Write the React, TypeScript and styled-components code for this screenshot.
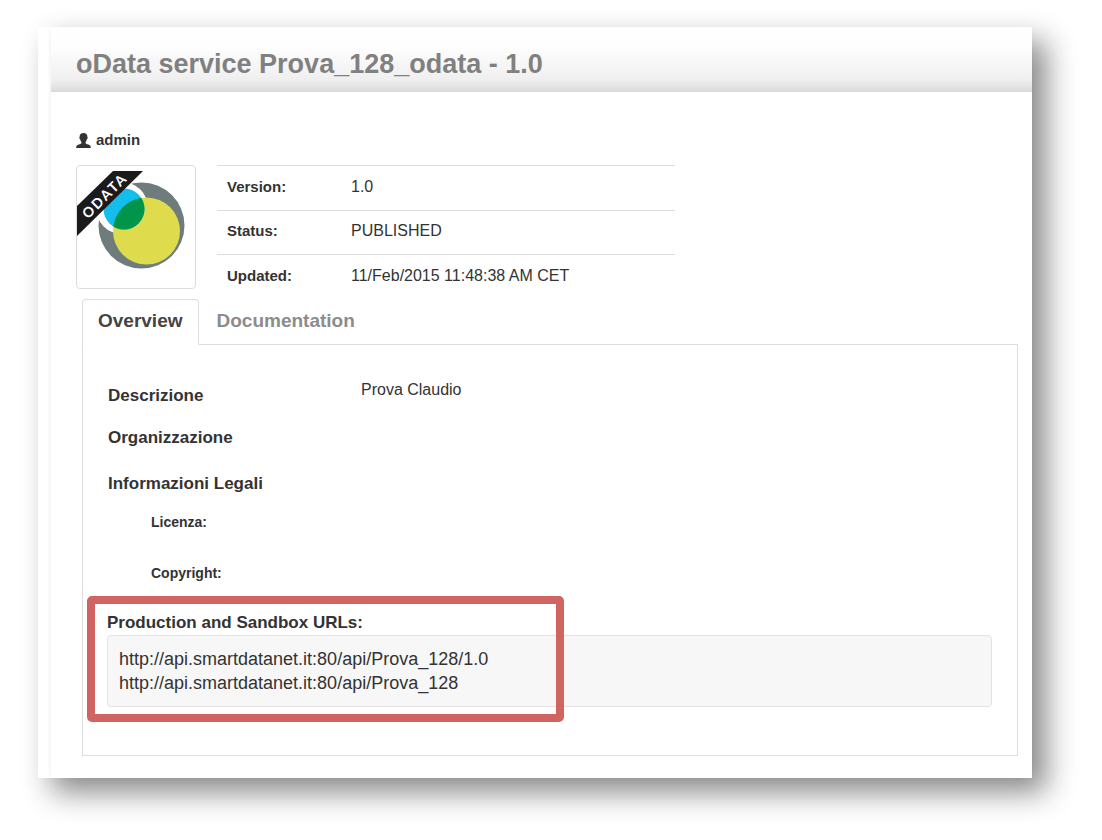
import React from 'react';
import styled, { createGlobalStyle } from 'styled-components';

const GlobalStyle = createGlobalStyle`
  *, *::before, *::after { box-sizing: border-box; }
  body {
    margin: 0;
    background: #fff;
    color: #333;
    font-family: "Liberation Sans", Arial, Helvetica, sans-serif;
    font-size: 15px;
    line-height: 20px;
  }
`;

const Page = styled.div`
  padding: 27px 70px 62px 38px;
`;

const Sheet = styled.main`
  padding-left: 13px;
  background: #fff;
  box-shadow: 14px 14px 28px rgba(0, 0, 0, 0.47);
`;

const Content = styled.div`
  padding-bottom: 22px;
  box-shadow: -3px 0 4px -2px rgba(0, 0, 0, 0.06);
`;

const Header = styled.header`
  height: 65px;
  padding: 0 25px;
  display: flex;
  align-items: center;
  border-top-left-radius: 4px;
  background: linear-gradient(#fff 0%, #fefefe 30%, #efefef 82%, #dadada 100%);
`;

const Title = styled.h1`
  margin: 8px 0 0;
  color: #808080;
  font-size: 27px;
  line-height: 32px;
`;

const Owner = styled.div`
  display: flex;
  align-items: center;
  gap: 5px;
  padding: 38px 25px 0;
  font-weight: bold;
`;

const Summary = styled.section`
  display: flex;
  align-items: flex-start;
  gap: 21px;
  padding: 15px 25px 0;
`;

const Thumbnail = styled.div`
  flex: none;
  width: 120px;
  height: 124px;
  border: 1px solid #ddd;
  border-radius: 4px;
  overflow: hidden;
`;

const Facts = styled.table`
  width: 458px;
  height: 134px;
  border-spacing: 0;
  text-align: left;

  th, td {
    height: 44px;
    padding: 0 10px 2px;
    border-top: 1px solid #ddd;
  }
  th { width: 125px; }
  td {
    padding-left: 9px;
    font-size: 16px;
  }
`;

const Tabs = styled.nav`
  display: flex;
  gap: 2px;
  margin-left: 31px;
`;

const Tab = styled.button<{ $active?: boolean }>`
  height: 46px;
  margin-bottom: -1px;
  padding: 0 15px 2px;
  border: 1px solid ${p => (p.$active ? '#ddd' : 'transparent')};
  border-bottom-color: ${p => (p.$active ? '#fff' : 'transparent')};
  border-radius: 4px 4px 0 0;
  background: ${p => (p.$active ? '#fff' : 'transparent')};
  color: ${p => (p.$active ? '#444' : '#8c8c8c')};
  font: bold 19px/24px "Liberation Sans", Arial, sans-serif;
  cursor: pointer;
`;

const Panel = styled.section`
  margin: 0 14px 0 31px;
  padding: 35px 25px 48px;
  border: 1px solid #ddd;
`;

const Details = styled.dl`
  display: grid;
  grid-template-columns: 253px 1fr;
  margin: 0;

  dt {
    padding-top: 6px;
    font-size: 17px;
    font-weight: bold;
  }
  dd {
    margin: 0;
    height: 42px;
    font-size: 16px;
  }
`;

const SectionTitle = styled.h2`
  margin: 0;
  font-size: 17px;
  line-height: 24px;
`;

const LegalTitle = styled(SectionTitle)`
  padding-top: 8px;
`;

const LegalTerms = styled.dl`
  margin: 0 0 28px 43px;
  padding-top: 16px;
  display: grid;
  gap: 31px;
  font-size: 14px;
  font-weight: bold;

  dt { margin: 0; }
`;

const Endpoints = styled.div`
  position: relative;
  margin-left: -1px;
`;

const Urls = styled.div`
  padding: 11px;
  border: 1px solid #e3e3e3;
  border-radius: 4px;
  background: #f7f7f7;
  font-size: 18px;
  line-height: 24px;
`;

const Highlight = styled.div`
  position: absolute;
  top: -15px;
  bottom: -15px;
  left: -20px;
  width: 477px;
  border: 8px solid #cf6460;
  border-radius: 5px;
  pointer-events: none;
`;

const UserIcon = () => (
  <svg width="15" height="15" viewBox="0 0 15 15" fill="#333" aria-hidden="true">
    <path d="M7.5 0C5 0 3.600 1.400 3.600 3.800c0 .5-.1.8-.3 1 .1.9.4 1.300.8 1.500.2 1.200.7 2 1.300 2.600v1.400C5 11.200 3 11.500 1.600 12 .6 12.400.2 13.200.2 15h14.600c0-1.800-.4-2.600-1.400-3-1.400-.5-3.400-.8-3.800-1.700V8.900c.6-.6 1.100-1.400 1.300-2.600.4-.2.7-.6.8-1.500-.2-.2-.3-.5-.3-1C11.400 1.400 10 0 7.500 0z" />
  </svg>
);

const ServiceLogo = () => (
  <svg width="118" height="122" viewBox="0 0 118 122" role="img" aria-label="OData service">
    <defs>
      <clipPath id="blueDisc"><circle cx="47" cy="43" r="20.500" /></clipPath>
    </defs>
    <circle cx="64.500" cy="59.500" r="43" fill="#6f7c7c" />
    <circle cx="45" cy="42" r="26" fill="#fff" />
    <circle cx="69.500" cy="65" r="33.500" fill="#dedb4c" />
    <circle cx="47" cy="43" r="20.500" fill="#13bdec" />
    <circle cx="69.500" cy="65" r="33.500" fill="#009548" clipPath="url(#blueDisc)" />
    <path d="M36 5H66L0 70V40z" fill="#1b1b1b" />
    <text
      x="27"
      y="35"
      transform="rotate(-45 27 29)"
      textAnchor="middle"
      fill="#fff"
      fontFamily="Lato, sans-serif"
      fontSize="14"
      fontWeight="700"
      letterSpacing="2"
    >
      ODATA
    </text>
  </svg>
);

const facts = [
  ['Version:', '1.0'],
  ['Status:', 'PUBLISHED'],
  ['Updated:', '11/Feb/2015 11:48:38 AM CET'],
];

const urls = [
  'http://api.smartdatanet.it:80/api/Prova_128/1.0',
  'http://api.smartdatanet.it:80/api/Prova_128',
];

export default function App() {
  return (
    <>
      <GlobalStyle />
      <Page>
        <Sheet>
          <Content>
            <Header>
              <Title>oData service Prova_128_odata - 1.0</Title>
            </Header>
            <Owner><UserIcon />admin</Owner>
            <Summary>
              <Thumbnail><ServiceLogo /></Thumbnail>
              <Facts>
                <tbody>
                  {facts.map(([label, value]) => (
                    <tr key={label}>
                      <th scope="row">{label}</th>
                      <td>{value}</td>
                    </tr>
                  ))}
                </tbody>
              </Facts>
            </Summary>
            <Tabs>
              <Tab type="button" $active>Overview</Tab>
              <Tab type="button">Documentation</Tab>
            </Tabs>
            <Panel>
              <Details>
                <dt>Descrizione</dt>
                <dd>Prova Claudio</dd>
                <dt>Organizzazione</dt>
                <dd />
              </Details>
              <LegalTitle>Informazioni Legali</LegalTitle>
              <LegalTerms>
                <dt>Licenza:</dt>
                <dt>Copyright:</dt>
              </LegalTerms>
              <Endpoints>
                <SectionTitle>Production and Sandbox URLs:</SectionTitle>
                <Urls>
                  {urls.map(url => <div key={url}>{url}</div>)}
                </Urls>
                <Highlight />
              </Endpoints>
            </Panel>
          </Content>
        </Sheet>
      </Page>
    </>
  );
}
